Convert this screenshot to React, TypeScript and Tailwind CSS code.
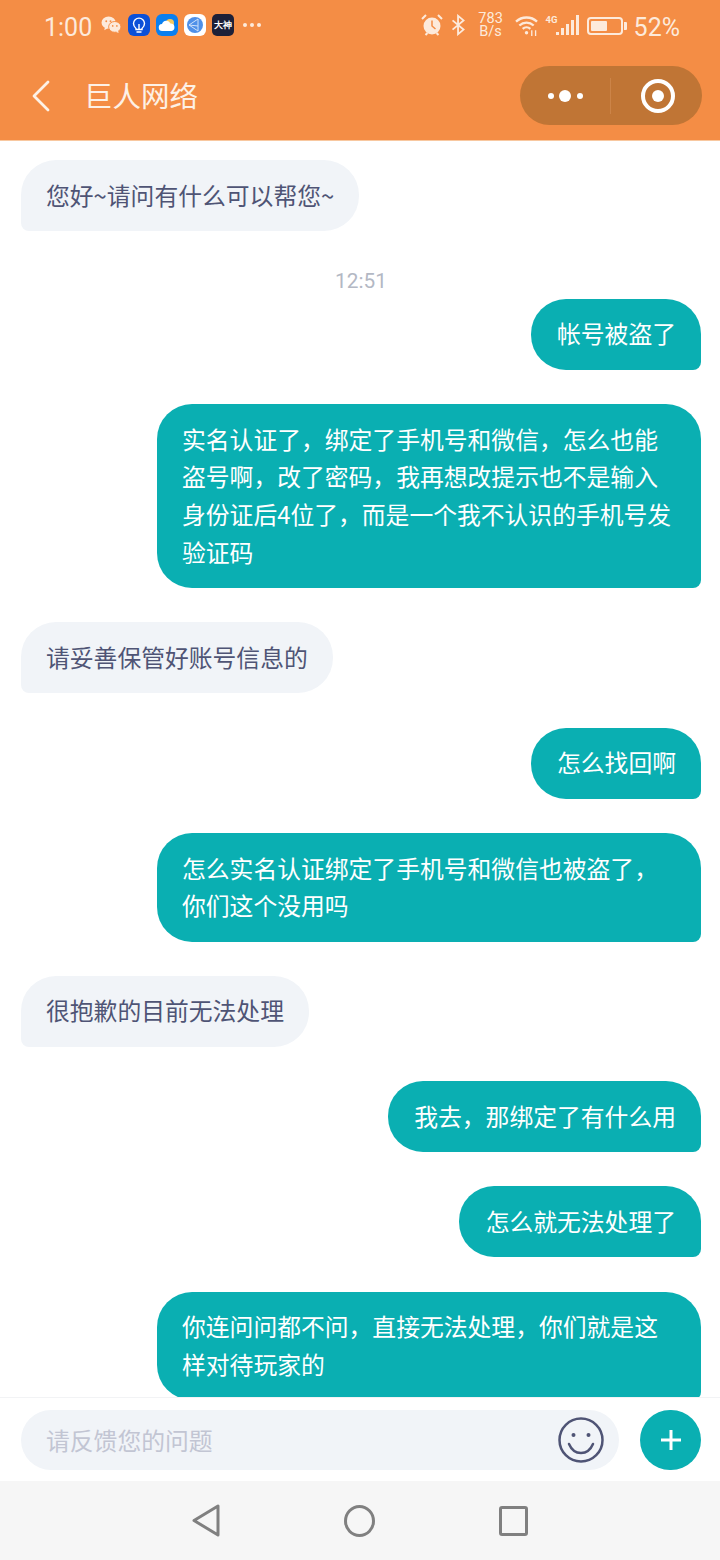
const FONT = "font-['Noto_Sans_CJK_SC','Noto_Sans',sans-serif]";

type Msg =
  | { side: 'left' | 'right'; text: string; wide?: boolean }
  | { side: 'time'; text: string };

const messages: Msg[] = [
  { side: 'left', text: '您好~请问有什么可以帮您~' },
  { side: 'time', text: '12:51' },
  { side: 'right', text: '帐号被盗了' },
  {
    side: 'right',
    wide: true,
    text: '实名认证了，绑定了手机号和微信，怎么也能盗号啊，改了密码，我再想改提示也不是输入身份证后4位了，而是一个我不认识的手机号发验证码',
  },
  { side: 'left', text: '请妥善保管好账号信息的' },
  { side: 'right', text: '怎么找回啊' },
  { side: 'right', wide: true, text: '怎么实名认证绑定了手机号和微信也被盗了，你们这个没用吗' },
  { side: 'left', text: '很抱歉的目前无法处理' },
  { side: 'right', text: '我去，那绑定了有什么用' },
  { side: 'right', text: '怎么就无法处理了' },
  { side: 'right', wide: true, text: '你连问问都不问，直接无法处理，你们就是这样对待玩家的' },
];

function WeChatIcon() {
  return (
    <svg width="20" height="18" viewBox="0 0 21 19" className="mr-[7px]">
      <ellipse cx="8" cy="7" rx="7.500" ry="6.500" fill="#fdeadb" />
      <path d="M4 12l-.5 3 3.500-2z" fill="#fdeadb" />
      <ellipse cx="14.500" cy="11.500" rx="6.500" ry="5.700" fill="#fdeadb" stroke="#f48d45" strokeWidth="1" />
      <path d="M18 15.500l.5 2.500-3-1.500z" fill="#fdeadb" />
      <circle cx="5.500" cy="5.500" r="1" fill="#f48d45" />
      <circle cx="10" cy="5.500" r="1" fill="#f48d45" />
      <circle cx="12.300" cy="10.500" r=".9" fill="#f48d45" />
      <circle cx="16.700" cy="10.500" r=".9" fill="#f48d45" />
    </svg>
  );
}

function AppIcons() {
  return (
    <div className="flex items-center gap-[6px]">
      <div className="w-[22px] h-[22px] rounded-[6px] bg-[#0b50d8] flex items-center justify-center">
        <svg width="16" height="18" viewBox="0 0 16 18" fill="none" stroke="#fff" strokeWidth="1.400">
          <path d="M5 12.500C3.500 11.300 2.500 9.600 2.500 7.600a5.500 5.500 0 0 1 11 0c0 2-1 3.700-2.500 4.900v1H5z" />
          <path d="M5.500 16h5M8 8v5" />
        </svg>
      </div>
      <div className="w-[22px] h-[22px] rounded-[6px] bg-[#0a7ff0] flex items-center justify-center">
        <svg width="18" height="16" viewBox="0 0 18 16">
          <circle cx="12" cy="6" r="4" fill="#f5c860" />
          <path d="M4.500 14a3.500 3.500 0 0 1-.5-7 4.500 4.500 0 0 1 8.500-.5A3.800 3.800 0 0 1 13.500 14z" fill="#fff" />
        </svg>
      </div>
      <div className="w-[22px] h-[22px] rounded-[6px] bg-white flex items-center justify-center">
        <svg width="18" height="18" viewBox="0 0 18 18">
          <circle cx="9" cy="9" r="8" fill="#4f90e8" />
          <path d="M3 9l9-6v12zM3 9l9 1" stroke="#cfe2fa" strokeWidth="1" fill="none" />
        </svg>
      </div>
      <div className="w-[22px] h-[22px] rounded-[5px] bg-[#1d2038] flex items-center justify-center text-white text-[9px] font-bold leading-none whitespace-nowrap">
        大神
      </div>
    </div>
  );
}

function StatusBar() {
  return (
    <div className="h-[52px] flex items-center justify-between pl-[44px] pr-[40px] text-[#fdeadb] font-['Roboto',sans-serif]">
      <div className="flex items-center">
        <span className="text-[25px] leading-none mt-[2px] mr-[9px]">1:00</span>
        <div className="flex items-center mb-[2px]">
          <WeChatIcon />
          <AppIcons />
          <div className="flex gap-[3.500px] ml-[9px]">
            <span className="w-[3.500px] h-[3.500px] rounded-full bg-[#fdeadb]" />
            <span className="w-[3.500px] h-[3.500px] rounded-full bg-[#fdeadb]" />
            <span className="w-[3.500px] h-[3.500px] rounded-full bg-[#fdeadb]" />
          </div>
        </div>
      </div>
      <div className="flex items-center">
        <div className="flex items-center mb-[2px]">
          <svg width="22" height="22" viewBox="0 0 22 22" className="mr-[8px]">
            <circle cx="11" cy="12" r="8.500" fill="#fdeadb" />
            <path d="M11 6.500V12l3.500 3" stroke="#f48d45" strokeWidth="1.500" fill="none" />
            <path d="M1 5l4-4M21 5l-4-4M4.500 21l2-2M17.500 21l-2-2" stroke="#fdeadb" strokeWidth="2" />
          </svg>
          <svg width="15" height="22" viewBox="0 0 15 24" fill="none" stroke="#fdeadb" strokeWidth="2" className="mr-[12px]">
            <path d="M1 7l12 10-6 5V2l6 5L1 17" />
          </svg>
          <div className="text-center w-[26px] text-[14.500px] leading-[13.500px] mr-[11px]">
            783
            <br />
            B/s
          </div>
          <svg width="24" height="21" viewBox="0 0 25 22" fill="none" stroke="#fdeadb" strokeWidth="2.400" className="mr-[7px]">
            <path d="M1 7a16 16 0 0 1 22 0M4.500 11a11 11 0 0 1 15 0M8 14.500a6 6 0 0 1 8 0" />
            <circle cx="12" cy="18.500" r="1.800" fill="#fdeadb" stroke="none" />
            <path d="M17.500 16v6M21.500 16v6" strokeWidth="1.400" />
          </svg>
          <div className="relative w-[33px] h-[20px] mr-[8px]">
            <span className="absolute left-0 top-0 text-[9.500px] font-bold leading-none">4G</span>
            <div className="absolute right-0 bottom-0 flex items-end gap-[2.500px]">
              <span className="w-[2.500px] h-[3px] bg-[#fdeadb]" />
              <span className="w-[2.500px] h-[7px] bg-[#fdeadb]" />
              <span className="w-[2.500px] h-[11px] bg-[#fdeadb]" />
              <span className="w-[2.500px] h-[15px] bg-[#fdeadb]" />
              <span className="w-[2.500px] h-[20px] bg-[#fdeadb]" />
            </div>
          </div>
        </div>
        <div className="flex items-center mr-[7px]">
          <div className="w-[36px] h-[18px] rounded-[4px] border-2 border-[#fdeadb] p-[2px]">
            <div className="w-[16px] h-full bg-[#fdeadb] rounded-[1px]" />
          </div>
          <span className="w-[2.500px] h-[8px] ml-[1.500px] bg-[#fdeadb] rounded-r-[1px]" />
        </div>
        <span className="text-[25px] leading-none mt-[2px]">52%</span>
      </div>
    </div>
  );
}

function NavBar() {
  return (
    <div className="flex items-center h-[88px] pl-[31px] pr-[18px] pb-[1px]">
      <svg width="20" height="32" viewBox="0 0 20 32" fill="none" stroke="#fdf1e6" strokeWidth="2.800" strokeLinecap="round" strokeLinejoin="round" className="mr-[33px]">
        <path d="M17 2L3 16l14 14" />
      </svg>
      <span className={`${FONT} text-[28.500px] text-[#fdf1e6] leading-none flex-1`}>巨人网络</span>
      <div className="w-[182px] h-[59px] rounded-full bg-[#c07535] flex items-center">
        <div className="w-[90px] flex items-center justify-center gap-[5.500px]">
          <span className="w-[6px] h-[6px] rounded-full bg-white" />
          <span className="w-[12px] h-[12px] rounded-full bg-white" />
          <span className="w-[6px] h-[6px] rounded-full bg-white" />
        </div>
        <div className="w-px h-[36px] bg-[#cc8448]" />
        <div className="flex-1 flex items-center justify-center pl-[3px]">
          <div className="w-[34px] h-[34px] rounded-full border-[4.500px] border-white flex items-center justify-center">
            <div className="w-[12px] h-[12px] rounded-full bg-white" />
          </div>
        </div>
      </div>
    </div>
  );
}

function Bubble({ msg }: { msg: Msg }) {
  if (msg.side === 'time') {
    return (
      <div className="text-center text-[20.800px] leading-[24px] text-[#b3b8c4] font-['Roboto',sans-serif] mt-[4px] -mb-[29px]">
        {msg.text}
      </div>
    );
  }
  if (msg.side === 'left') {
    return (
      <div className="self-start rounded-[35px] rounded-bl-[8px] bg-[#f1f4f8] pl-[25px] pr-[25px] pt-[15.600px] pb-[17.600px] text-[#4f5475]">
        {msg.text}
      </div>
    );
  }
  return (
    <div
      className={`self-end rounded-[35px] rounded-br-[8px] bg-[#0aafb2] pr-[25px] pt-[15.600px] pb-[17.600px] text-white ${
        msg.wide ? 'w-[544px] pl-[25px]' : 'pl-[26.500px]'
      }`}
    >
      {msg.text}
    </div>
  );
}

export default function App() {
  return (
    <div className={`${FONT} w-[720px] h-[1560px] flex flex-col overflow-hidden bg-white`}>
      <div className="h-[141px] shrink-0 bg-[#f48d45] border-b border-[#f8c8a0]">
        <StatusBar />
        <NavBar />
      </div>

      <div className="flex-1 min-h-0 overflow-hidden flex flex-col gap-[34.400px] pl-[21px] pr-[19px] pt-[19px] text-[23.800px] leading-[37.700px]">
        {messages.map((m, i) => (
          <Bubble key={i} msg={m} />
        ))}
      </div>

      <div className="h-[84px] shrink-0 border-t border-[#f2f3f5] flex items-center gap-[21px] pl-[21px] pr-[19px] bg-white">
        <div className="w-[598px] h-[60px] rounded-full bg-[#f1f4f8] flex items-center justify-between pl-[25px] pr-[15px]">
          <span className="text-[23.800px] text-[#c2c5d3]">请反馈您的问题</span>
          <svg width="46" height="46" viewBox="0 0 46 46" fill="none" stroke="#4f5475" strokeWidth="2.500">
            <circle cx="23" cy="23" r="21.500" />
            <circle cx="15.500" cy="18" r="2" fill="#4f5475" stroke="none" />
            <circle cx="30.500" cy="18" r="2" fill="#4f5475" stroke="none" />
            <path d="M11 27c3 7 7 9 12 9s9-2 12-9" strokeLinecap="round" />
          </svg>
        </div>
        <div className="w-[61px] h-[60px] rounded-full bg-[#0aafb2] flex items-center justify-center">
          <svg width="20" height="20" viewBox="0 0 20 20" stroke="#fff" strokeWidth="3">
            <path d="M10 0v20M0 10h20" />
          </svg>
        </div>
      </div>

      <div className="h-[79px] shrink-0 bg-[#f6f6f6] flex items-center justify-center gap-[123.500px] pr-[2px]">
        <svg width="30" height="33" viewBox="0 0 30 33" fill="none" stroke="#808080" strokeWidth="3" strokeLinejoin="round">
          <path d="M27 2v29L3 16.500z" />
        </svg>
        <svg width="31" height="32" viewBox="0 0 31 32" fill="none" stroke="#808080" strokeWidth="3">
          <ellipse cx="15.500" cy="16" rx="14" ry="14.500" />
        </svg>
        <svg width="29" height="30" viewBox="0 0 29 30" fill="none" stroke="#808080" strokeWidth="3" strokeLinejoin="round">
          <rect x="1.500" y="1.500" width="26" height="27" rx="1.500" />
        </svg>
      </div>
    </div>
  );
}
